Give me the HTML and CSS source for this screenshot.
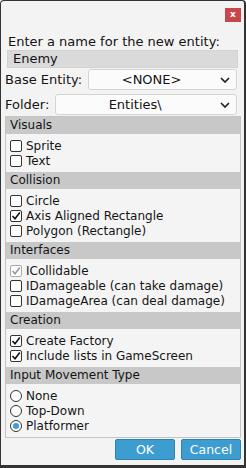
FILE: index.html
```html
<!DOCTYPE html>
<html lang="en">

<head>
    <meta charset="UTF-8" />
    <title>Add Entity</title>
    <link rel="stylesheet" href="styles.css">
</head>

<body>

    <div class="window">
        <div class="title-bar">
            <div class="close-btn">x</div>
        </div>

        <div class="name-label">Enter a name for the new entity:</div>
        <div class="name-input">Enemy</div>

        <div class="field-row base-row">
            <span class="field-label">Base Entity:</span>
            <div class="select">
                <span class="select-value">&lt;NONE&gt;</span>
                <svg class="chevron" width="10" height="6" viewBox="0 0 10 6"><path d="M1 1 L5 5 L9 1" fill="none" stroke="#222" stroke-width="1.7"/></svg>
            </div>
        </div>

        <div class="field-row folder-row">
            <span class="field-label">Folder:</span>
            <div class="select">
                <span class="select-value">Entities\</span>
                <svg class="chevron" width="10" height="6" viewBox="0 0 10 6"><path d="M1 1 L5 5 L9 1" fill="none" stroke="#222" stroke-width="1.7"/></svg>
            </div>
        </div>

        <div class="options">
            <div class="section-head">Visuals</div>
            <div class="section-body">
                <div class="option"><span class="check"></span>Sprite</div>
                <div class="option"><span class="check"></span>Text</div>
            </div>

            <div class="section-head">Collision</div>
            <div class="section-body">
                <div class="option"><span class="check"></span>Circle</div>
                <div class="option"><span class="check checked"><svg width="10" height="10" viewBox="0 0 10 10"><path d="M1.5 5 L4 7.8 L8.8 1.6" fill="none" stroke="#111" stroke-width="1.6"/></svg></span>Axis Aligned Rectangle</div>
                <div class="option"><span class="check"></span>Polygon (Rectangle)</div>
            </div>

            <div class="section-head">Interfaces</div>
            <div class="section-body">
                <div class="option disabled"><span class="check checked"><svg width="10" height="10" viewBox="0 0 10 10"><path d="M1.5 5 L4 7.8 L8.8 1.6" fill="none" stroke="#999" stroke-width="1.6"/></svg></span>ICollidable</div>
                <div class="option"><span class="check"></span>IDamageable (can take damage)</div>
                <div class="option"><span class="check"></span>IDamageArea (can deal damage)</div>
            </div>

            <div class="section-head">Creation</div>
            <div class="section-body">
                <div class="option"><span class="check checked"><svg width="10" height="10" viewBox="0 0 10 10"><path d="M1.5 5 L4 7.8 L8.8 1.6" fill="none" stroke="#111" stroke-width="1.6"/></svg></span>Create Factory</div>
                <div class="option"><span class="check checked"><svg width="10" height="10" viewBox="0 0 10 10"><path d="M1.5 5 L4 7.8 L8.8 1.6" fill="none" stroke="#111" stroke-width="1.6"/></svg></span>Include lists in GameScreen</div>
            </div>

            <div class="section-head">Input Movement Type</div>
            <div class="section-body">
                <div class="option"><span class="radio"></span>None</div>
                <div class="option"><span class="radio"></span>Top-Down</div>
                <div class="option"><span class="radio selected"></span>Platformer</div>
            </div>
        </div>

        <div class="buttons">
            <div class="btn">OK</div>
            <div class="btn">Cancel</div>
        </div>
    </div>

</body>

</html>
```

FILE: styles.css
```css
* {
    box-sizing: border-box;
}

body {
    margin: 0;
    background: #f3f3f3;
    font-family: "DejaVu Sans", Verdana, sans-serif;
    font-size: 13px;
    color: #141414;
}

.window {
    width: 246px;
    height: 468px;
    background: #f3f3f3;
    border: 1px solid #333;
    border-right-width: 2px;
    border-bottom-width: 3px;
    border-radius: 4px 4px 0 0;
}

.title-bar {
    display: flex;
    justify-content: flex-end;
    padding: 7px 3px 0 0;
    height: 33px;
}

.close-btn {
    width: 16px;
    height: 14px;
    background: #c9474b;
    color: #fff;
    font-size: 9px;
    font-weight: bold;
    line-height: 13px;
    text-align: center;
}

.name-label {
    padding-left: 7px;
    line-height: 16px;
}

.name-input {
    margin: 0 6px 0 6px;
    height: 18px;
    line-height: 16px;
    padding-left: 5px;
    background: #dadada;
    border: 1px solid #d2d2d2;
}

.field-row {
    display: flex;
    align-items: center;
    gap: 6px;
    padding: 0 7px 0 4px;
}

.base-row {
    margin-top: 1px;
}

.folder-row {
    margin-top: 4px;
}

.select {
    flex: 1;
    height: 21px;
    display: flex;
    align-items: center;
    background: #fbfbfb;
    border: 1px solid #d4d4d4;
    border-radius: 3px;
    padding: 0 6px 0 0;
}

.select-value {
    flex: 1;
    text-align: center;
}

.chevron {
    margin-left: 6px;
}

.options {
    margin: 1px 3px 0 4px;
    border: 1px solid #c4c4c4;
    background: #f4f4f4;
    font-size: 12px;
}

.section-head {
    background: #c8c8c8;
    height: 17px;
    line-height: 17px;
    padding-left: 4px;
}

.section-body {
    padding: 4px 0 4px 4px;
}

.option {
    display: flex;
    align-items: center;
    height: 15px;
    white-space: nowrap;
}

.check {
    width: 12px;
    height: 12px;
    border: 1px solid #333;
    border-radius: 2px;
    background: #fff;
    margin-right: 4px;
    display: flex;
    align-items: center;
    justify-content: center;
    flex: none;
}

.disabled .check {
    border-color: #aaa;
}

.radio {
    width: 12px;
    height: 12px;
    border: 1px solid #333;
    border-radius: 50%;
    background: #fff;
    margin-right: 4px;
    display: flex;
    align-items: center;
    justify-content: center;
    flex: none;
}

.radio.selected::after {
    content: "";
    width: 6px;
    height: 6px;
    border-radius: 50%;
    background: #3a9bd6;
}

.buttons {
    display: flex;
    justify-content: flex-end;
    gap: 6px;
    padding: 1px 3px 0 0;
}

.btn {
    width: 60px;
    height: 21px;
    line-height: 19px;
    font-size: 12.5px;
    text-align: center;
    color: #fff;
    background: #3d9dd1;
    border: 1px solid #2f83b3;
    border-radius: 2px;
}
```
